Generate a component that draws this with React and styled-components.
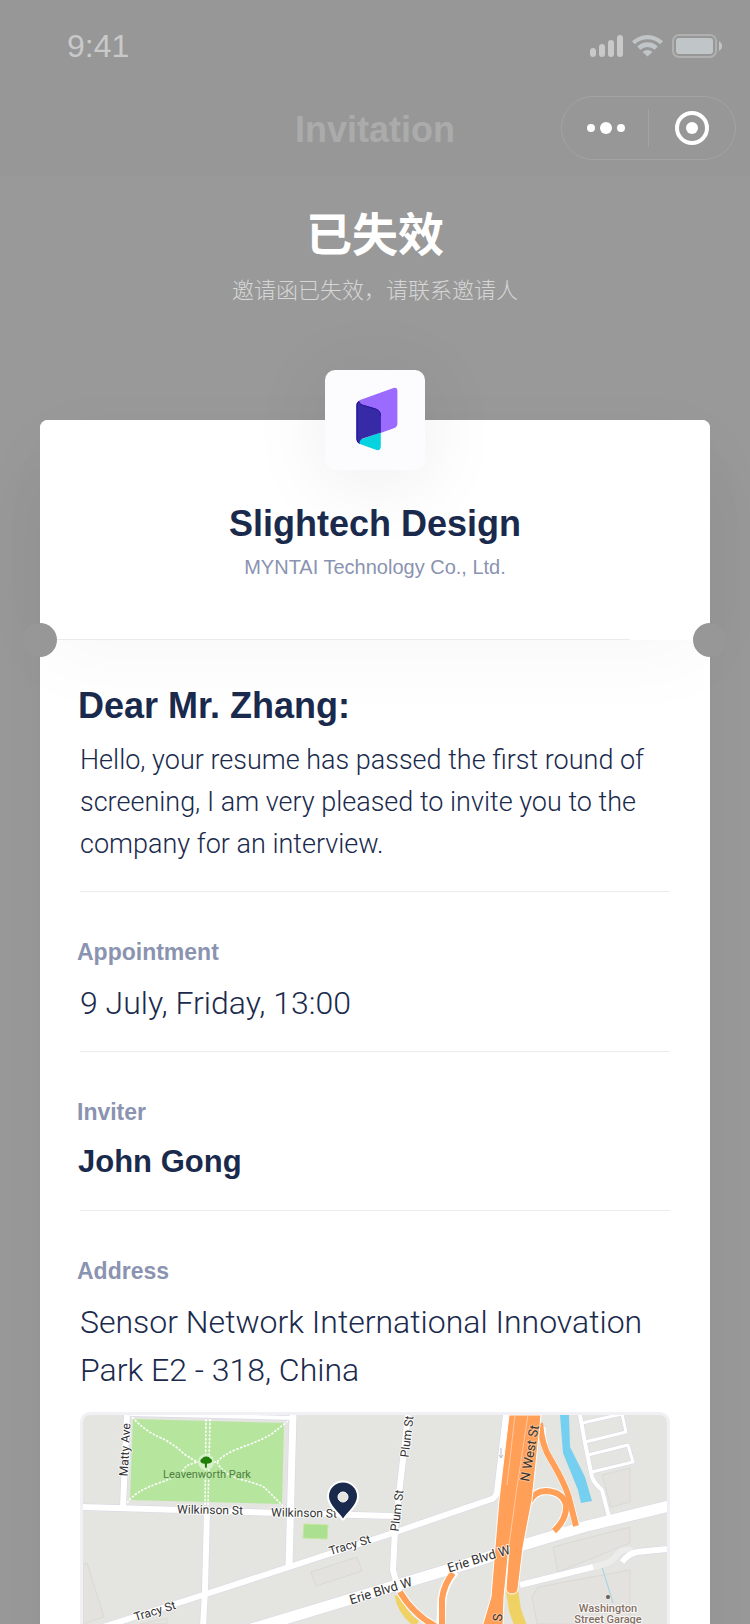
import React from "react";
import styled, { createGlobalStyle } from "styled-components";

const GlobalStyle = createGlobalStyle`
  *, *::before, *::after { box-sizing: border-box; }
  body {
    margin: 0;
    background: #999999;
    font-family: "Liberation Sans", Arial, "Noto Sans CJK SC", sans-serif;
    color: #1a2a4c;
  }
  h1, h2, h3, p, dl, dt, dd { margin: 0; font-weight: 400; }
`;

const Page = styled.div`
  display: flex;
  flex-direction: column;
  height: 100vh;
  overflow: hidden;
`;

const TopBar = styled.header`
  flex: none;
  background: #979797;
  padding-bottom: 8px;
`;

const StatusBar = styled.div`
  display: flex;
  align-items: center;
  justify-content: space-between;
  height: 88px;
  padding: 4px 28px 0 67px;
`;

const Clock = styled.time`
  font-size: 32px;
  line-height: 40px;
  color: #c9c9c9;
`;

const NavBar = styled.div`
  display: grid;
  grid-template-columns: 1fr auto 1fr;
  align-items: center;
  height: 80px;
  padding: 0 14px;
`;

const NavTitle = styled.h1`
  grid-column: 2;
  padding-top: 3px;
  font-size: 36px;
  line-height: 44px;
  font-weight: 700;
  color: #ababab;
`;

const Capsule = styled.div`
  justify-self: end;
  display: flex;
  align-items: center;
  height: 64px;
  border: 1px solid #a3a3a3;
  border-radius: 32px;
`;

const CapsuleButton = styled.button`
  display: flex;
  align-items: center;
  justify-content: center;
  width: 86px;
  height: 38px;
  padding: 0;
  border: 0;
  background: none;
  cursor: pointer;

  & + & {
    width: 87px;
    border-left: 1px solid #a3a3a3;
  }
`;

const Notice = styled.section`
  flex: none;
  padding: 25px 24px 116px;
  text-align: center;
  font-family: "Noto Sans CJK SC", sans-serif;
`;

const NoticeTitle = styled.h2`
  font-size: 46px;
  line-height: 60px;
  font-weight: 700;
  color: #ffffff;
`;

const NoticeText = styled.p`
  padding-top: 11px;
  font-size: 22px;
  line-height: 32px;
  font-weight: 300;
  color: #d6d6d6;
`;

const Card = styled.main`
  flex: 1 0 auto;
  margin: 0 40px;
  background: #ffffff;
  border-radius: 8px 8px 0 0;
  box-shadow: 0 60px 60px rgba(0, 0, 0, 0.05);
`;

const CardHead = styled.div`
  position: relative;
  display: flex;
  flex-direction: column;
  align-items: center;
  height: 220px;
  background: #ffffff;
  border-radius: 8px 8px 0 0;
  box-shadow: 0 20px 80px rgba(0, 0, 0, 0.03);

  &::before,
  &::after {
    content: "";
    position: absolute;
    bottom: -17px;
    width: 34px;
    height: 34px;
    border-radius: 50%;
    background: #979797;
  }
  &::before { left: -17px; }
  &::after { right: -17px; }
`;

const LogoTile = styled.div`
  width: 100px;
  height: 100px;
  margin-top: -50px;
  border-radius: 10px;
  background: #fcfcff;
  box-shadow: 0 10px 80px rgba(0, 0, 0, 0.08);
`;

const Company = styled.h2`
  padding-top: 32px;
  font-size: 36px;
  line-height: 44px;
  font-weight: 700;
`;

const LegalName = styled.p`
  padding-top: 7px;
  font-size: 20px;
  line-height: 28px;
  color: #8a93b0;
`;

const TearLine = styled.div`
  align-self: stretch;
  height: 1px;
  margin: auto 80px 0 0;
  background: #ebebeb;
`;

const CardBody = styled.div`
  position: relative;
  padding: 44px 40px 0;
`;

const Greeting = styled.h3`
  margin-left: -2px;
  font-size: 36px;
  line-height: 44px;
  font-weight: 700;
`;

const Message = styled.p`
  padding: 11px 0 26px;
  border-bottom: 1px solid #ececec;
  font-family: Roboto, "Liberation Sans", sans-serif;
  font-size: 27px;
  line-height: 42px;
  font-weight: 300;
`;

const Field = styled.div`
  padding: 46px 0 24px;
  border-bottom: 1px solid #ececec;

  &:last-child {
    padding-bottom: 18px;
    border-bottom: 0;
  }
`;

const Label = styled.dt`
  margin-left: -3px;
  font-size: 23px;
  line-height: 28px;
  font-weight: 700;
  color: #8a93b0;
`;

const Value = styled.dd`
  margin-left: ${(p) => (p.$strong ? -2 : 0)}px;
  padding-top: ${(p) => (p.$strong ? 12 : 13)}px;
  font-family: ${(p) => (p.$strong ? "inherit" : 'Roboto, "Liberation Sans", sans-serif')};
  font-size: ${(p) => (p.$strong ? 31 : 32)}px;
  line-height: 48px;
  font-weight: ${(p) => (p.$strong ? 700 : 300)};
`;

const MapFrame = styled.div`
  height: 212px;
  border: 3px solid #f0f0f5;
  border-bottom: 0;
  border-radius: 10px 10px 0 0;
  overflow: hidden;
`;

const MapDrawing = styled.svg`
  display: block;
  width: 100%;
  height: 100%;
`;

const MapText = styled.text`
  font-family: Roboto, "Liberation Sans", sans-serif;
  font-size: ${(p) => p.$size || 12}px;
  font-weight: ${(p) => p.$weight || 400};
  fill: ${(p) => p.$color || "#333333"};
  stroke: ${(p) => p.$halo || "#ffffff"};
  stroke-width: 2px;
  stroke-opacity: 0.8;
  stroke-linejoin: round;
  paint-order: stroke;
  text-anchor: middle;
`;

function StatusIcons() {
  return (
    <svg width="132" height="24" viewBox="0 0 132 24" aria-hidden="true">
      <g fill="#c9c9c9">
        <rect x="0" y="14" width="6" height="9" rx="3" />
        <rect x="9" y="10" width="6" height="13" rx="3" />
        <rect x="18" y="6" width="6" height="17" rx="3" />
        <rect x="27" y="1" width="6" height="22" rx="3" />
      </g>
      <g fill="#c0c5c8">
        <path d="M42 7.3a22.2 22.2 0 0 1 31 0l-3 3a17.8 17.8 0 0 0-25 0z" />
        <path d="M47.2 12.6a14.6 14.6 0 0 1 20.6 0l-3.2 3.2a10.2 10.2 0 0 0-14.2 0z" />
        <path d="M52.6 18a7 7 0 0 1 9.8 0l-4.9 4.6z" />
        <rect x="86" y="4" width="37" height="16" rx="3" />
        <path d="M129 7.2q3 1.4 3 4.8t-3 4.8z" />
      </g>
      <rect x="83" y="1" width="43" height="22" rx="6" fill="none" stroke="#b0b0b0" strokeWidth="2" />
    </svg>
  );
}

function Logo() {
  return (
    <svg width="100" height="100" viewBox="0 0 100 100" aria-label="Slightech Design">
      <path
        d="M35 30 68.5 18Q72.4 17.2 72.4 21V53.5Q72.4 56.6 69.5 57.9L55.7 63 32 66V34Q32.2 31 35 30Z"
        fill="#9b6bff"
      />
      <path
        d="M35.6 69.4 55.8 62.2V76.5Q55.6 80.8 51.5 80L36.3 74.6Q32.6 73.4 32.4 71Z"
        fill="#07d2e0"
      />
      <path
        d="M34 31.4Q34.4 33.6 37.2 34.8L50.5 38.6Q55.9 40.6 55.9 45.5V62.4L37.8 68.6Q34 70.6 34.6 73.8 31.5 72.5 31.5 69V34.6Q31.6 32 34 31.4Z"
        fill="#362aa6"
      />
      <path d="M34.3 31.8Q34.4 33.8 37.2 35L50.5 38.9Q55.5 40.8 55.6 45.5" fill="none" stroke="#241692" strokeWidth="1" />
      <path d="M34.4 73.4Q31.9 72 31.9 69V34.6Q32 32.2 34 31.6" fill="none" stroke="#1d0f8c" strokeWidth="1" />
    </svg>
  );
}

const streets = [
  { d: "M47 -1 212 3", w: 4 },
  { d: "M44 0 40 92", w: 6 },
  { d: "M0 92 197 98 310 101", w: 6 },
  { d: "M124 95 122 175 120 212", w: 6 },
  { d: "M210 0 206 152", w: 7 },
  { d: "M20 212 120 180 206 152 310 118 397 88 409 84Q413 82 414 77L423 0", w: 6 },
  { d: "M325 0 312 115 310 155 316 177", w: 6 },
  { d: "M497 0 502 28 509 62Q511 68 519 75L526 102", w: 4 },
  { d: "M499 8 539 -1 543 17 502 27", w: 3 },
  { d: "M505 40 545 30 550 47 509 57", w: 3 },
  { d: "M437 170 510 152", w: 6 },
  { d: "M539 147Q545 139 554 137L584 134", w: 6 },
  { d: "M155 218 185 209 397 145 430 133 500 112 586 91", w: 11 },
];

const buildings = [
  "228,157 274,142 279,156 233,171",
  "0,150 4,148 21,202 0,209",
  "519,60 547,53 547,87 528,92",
  "470,132 547,112 547,128 475,157",
  "449,182 455,172 547,155 547,209 454,209",
  "57,209 84,203 84,209",
];

const parkPaths = [
  "M49 2Q62 16 76 22T101 39L114 47 122 47",
  "M44 88Q52 76 76 68T103 51L114 47",
  "M205 6 190 18Q180 25 154 34 140 40 134 47L128 47",
  "M134 47Q140 60 160 65T183 74L200 91",
  "M123 4 122 92",
  "M127 4 125 92",
];

const labels = [
  { x: 46, y: 35, r: -87, t: "Matty Ave" },
  { x: 127, y: 99, r: 1, t: "Wilkinson St" },
  { x: 221, y: 102, r: 1, t: "Wilkinson St" },
  { x: 328, y: 22, r: -83, t: "Plum St" },
  { x: 318, y: 96, r: -83, t: "Plum St" },
  { x: 73, y: 200, r: -17, t: "Tracy St" },
  { x: 268, y: 134, r: -17, t: "Tracy St" },
  { x: 299, y: 180, r: -17, t: "Erie Blvd W", s: 13 },
  { x: 397, y: 148, r: -17, t: "Erie Blvd W", s: 13 },
  { x: 451, y: 39, r: -80, t: "N West St", s: 13, halo: "#ffc596" },
  { x: 419, y: 203, r: -85, t: "S", s: 13, halo: "#ffc596" },
];

function CityMap() {
  return (
    <MapDrawing viewBox="0 0 584 209" preserveAspectRatio="xMidYMin slice" role="img" aria-label="Map of the interview address">
      <rect width="584" height="209" fill="#e4e4e0" />
      {buildings.map((points) => (
        <polygon key={points} points={points} fill="#e4e2de" stroke="#dbd9d6" strokeWidth="1" />
      ))}
      <polygon points="50,4 201,8 199,89 47,85" fill="#b6e59e" />
      <polygon points="221,109 245,110 244,124 220,123" fill="#aae08f" stroke="#c3e89f" />
      <polygon points="477,0 486,0 487,32 502,62 509,86 498,88 495,75 480,38" fill="#74cff0" />
      <path d="M519 152 530 188" fill="none" stroke="#9bd3e8" strokeWidth="1" />
      <g fill="none" stroke="#ffffff" strokeWidth="1.6" strokeDasharray="2.4 1.4">
        {parkPaths.map((d) => (
          <path key={d} d={d} />
        ))}
      </g>
      <g fill="none" strokeLinejoin="round">
        {streets.map((s) => (
          <path key={s.d} d={s.d} stroke="#d7d7e6" strokeWidth={s.w + 1} />
        ))}
        <path d="M510 152 522 149Q530 146 534 140T547 135" stroke="#ececea" strokeWidth="6" strokeLinecap="round" />
        {streets.map((s) => (
          <path key={s.d} d={s.d} stroke="#ffffff" strokeWidth={s.w} />
        ))}
      </g>
      <g fill="none" stroke="#ffffff" strokeWidth="9">
        <path d="M459 12Q459 32 468 45 484 72 487 87L493 110" strokeWidth="7" />
        <path d="M446 87Q452 76 463 76 480 77 483 90 484 104 471 116" strokeWidth="8" />
        <path d="M372 156Q361 169 359 184L358 209" />
      </g>
      <path d="M315 180Q318 198 334 209" fill="none" stroke="#f0d264" strokeWidth="7" />
      <path d="M317 177Q330 199 352 211" fill="none" stroke="#ffffff" strokeWidth="8" />
      <g fill="none" stroke="#ff9f58">
        <path d="M317 177Q330 199 352 211" strokeWidth="6" />
        <path d="M370 158Q361 169 359 184L359 212" strokeWidth="6" />
        <path d="M457 8Q459 32 468 45 484 72 487 87L493 111" strokeWidth="6" />
        <path d="M446 87Q452 76 463 76 480 77 483 90 484 104 471 116" strokeWidth="6" />
      </g>
      <path d="M429 175 432 195 438 212" fill="none" stroke="#f0d264" strokeWidth="12" />
      <path
        d="M426 0H458L449 85 440 132 435 174Q434 179 429 179T423 174L426 132 421 182 420 212H399L408 182 412 132 416 85Z"
        fill="#ff9f58"
        stroke="#ffffff"
        strokeWidth="1"
      />
      <g fill="none" stroke="#ffc89f" strokeWidth="1">
        <path d="M432 0 424 70" />
        <path d="M445 0 434 72 426 130" />
      </g>
      <path d="M418 33V43M416 40 418 43 420 40" fill="none" stroke="#b9b9c6" strokeWidth="1" />

      <circle cx="123" cy="47" r="8" fill="#d8f0cb" />
      <path
        d="M117.600 47q-.8-2.600 1.600-3.400 1-2.400 4-2.200 3-.2 4 2.200 2.400.8 1.600 3.400-1.600 1.800-3.800 1.400l-1 .4-.2 3.900h-1.800l-.2-3.900q-3 .2-4.200-1.800z"
        fill="#1f7f06"
      />
      {labels.map((l) => (
        <MapText key={`${l.t}${l.x}`} $size={l.s} $halo={l.halo} transform={`translate(${l.x} ${l.y}) rotate(${l.r})`}>
          {l.t}
        </MapText>
      ))}
      <MapText x="124" y="63" $size={11} $color="#4e8040" $halo="#b6e59e">Leavenworth Park</MapText>
      <circle cx="525" cy="182" r="2" fill="#6d5a50" />
      <MapText x="525" y="197" $size={11} $weight={500} $color="#857064">Washington</MapText>
      <MapText x="525" y="208" $size={11} $weight={500} $color="#857064">Street Garage</MapText>

      <path
        d="M260 103.500C256 97 246 90 246 81.500a14 14 0 0 1 28 0C274 90 264 97 260 103.500Z"
        fill="#1a2a4c"
        stroke="#ffffff"
        strokeWidth="4"
        strokeLinejoin="round"
        paintOrder="stroke"
      />
      <circle cx="260" cy="82" r="5" fill="#e4e4e0" stroke="#ffffff" />
    </MapDrawing>
  );
}

export default function App() {
  return (
    <>
      <GlobalStyle />
      <Page>
        <TopBar>
          <StatusBar>
            <Clock>9:41</Clock>
            <StatusIcons />
          </StatusBar>
          <NavBar>
            <NavTitle>Invitation</NavTitle>
            <Capsule>
              <CapsuleButton type="button" aria-label="More">
                <svg width="40" height="12" viewBox="0 0 40 12" fill="#ffffff" aria-hidden="true">
                  <circle cx="6" cy="6" r="4" />
                  <circle cx="21" cy="6" r="6" />
                  <circle cx="36" cy="6" r="4" />
                </svg>
              </CapsuleButton>
              <CapsuleButton type="button" aria-label="Close">
                <svg width="34" height="34" viewBox="0 0 34 34" aria-hidden="true">
                  <circle cx="17" cy="17" r="15" fill="none" stroke="#ffffff" strokeWidth="4" />
                  <circle cx="17" cy="17" r="6" fill="#ffffff" />
                </svg>
              </CapsuleButton>
            </Capsule>
          </NavBar>
        </TopBar>

        <Notice lang="zh-CN">
          <NoticeTitle>已失效</NoticeTitle>
          <NoticeText>邀请函已失效，请联系邀请人</NoticeText>
        </Notice>

        <Card>
          <CardHead>
            <LogoTile>
              <Logo />
            </LogoTile>
            <Company>Slightech Design</Company>
            <LegalName>MYNTAI Technology Co., Ltd.</LegalName>
            <TearLine />
          </CardHead>
          <CardBody>
            <Greeting>Dear Mr. Zhang:</Greeting>
            <Message>
              Hello, your resume has passed the first round of screening, I am very pleased to invite you to the
              company for an interview.
            </Message>
            <dl>
              <Field>
                <Label>Appointment</Label>
                <Value>9 July, Friday, 13:00</Value>
              </Field>
              <Field>
                <Label>Inviter</Label>
                <Value $strong>John Gong</Value>
              </Field>
              <Field>
                <Label>Address</Label>
                <Value>Sensor Network International Innovation Park E2 - 318, China</Value>
              </Field>
            </dl>
            <MapFrame>
              <CityMap />
            </MapFrame>
          </CardBody>
        </Card>
      </Page>
    </>
  );
}
